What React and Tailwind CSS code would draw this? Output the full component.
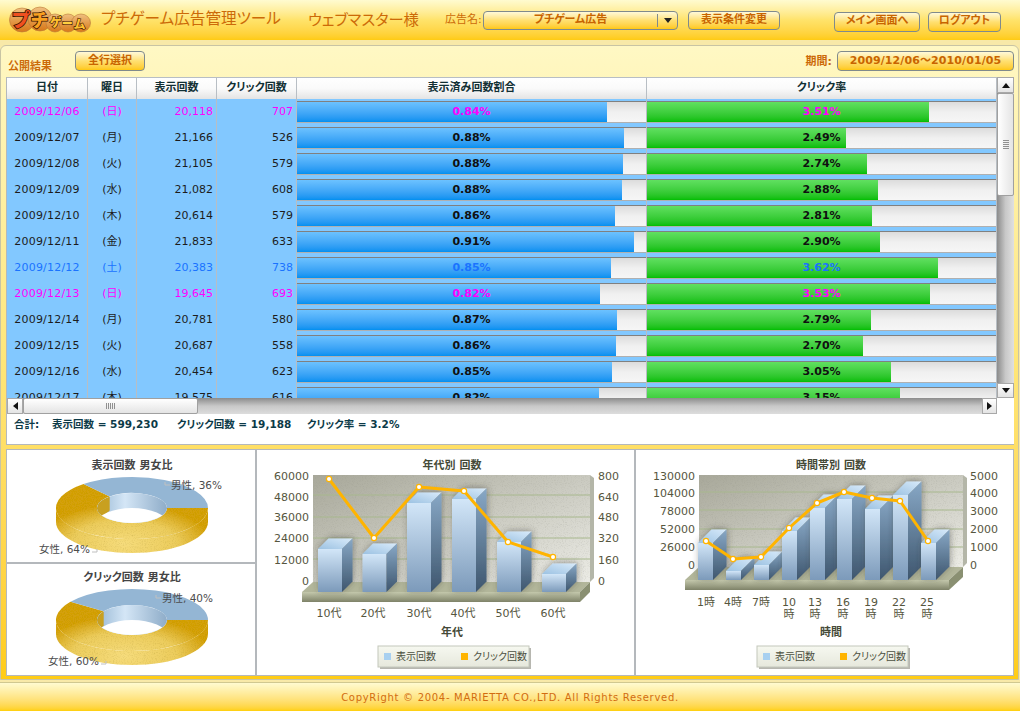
import React from "react";

const rows = [
  ["2009/12/06", "日", "20,118", "707", "0.84%", "3.51%", 310, 282, "sun"],
  ["2009/12/07", "月", "21,166", "526", "0.88%", "2.49%", 327, 199, ""],
  ["2009/12/08", "火", "21,105", "579", "0.88%", "2.74%", 326, 220, ""],
  ["2009/12/09", "水", "21,082", "608", "0.88%", "2.88%", 325, 231, ""],
  ["2009/12/10", "木", "20,614", "579", "0.86%", "2.81%", 318, 225, ""],
  ["2009/12/11", "金", "21,833", "633", "0.91%", "2.90%", 337, 233, ""],
  ["2009/12/12", "土", "20,383", "738", "0.85%", "3.62%", 314, 291, "sat"],
  ["2009/12/13", "日", "19,645", "693", "0.82%", "3.53%", 303, 283, "sun"],
  ["2009/12/14", "月", "20,781", "580", "0.87%", "2.79%", 320, 224, ""],
  ["2009/12/15", "火", "20,687", "558", "0.86%", "2.70%", 319, 216, ""],
  ["2009/12/16", "水", "20,454", "623", "0.85%", "3.05%", 315, 244, ""],
  ["2009/12/17", "木", "19,575", "616", "0.82%", "3.15%", 302, 253, ""],
];

const rowColor = { sun: "text-[#ff00ff]", sat: "text-[#1a73ff]", "": "text-[#1c1c1c]" };

const GlossButton = ({ className = "", children }) => (
  <div
    className={`flex items-center justify-center rounded-[4px] border border-[#808a8c] bg-linear-to-b from-[#fff9d8] via-[#ffe070] to-[#ffc808] text-[11px] font-bold text-[#c86400] ${className}`}
  >
    {children}
  </div>
);

const Logo = () => (
  <svg width="82" height="28" viewBox="0 0 82 28" className="shrink-0">
    <defs>
      <linearGradient id="logoBlob" x1="0" y1="0" x2="0" y2="1">
        <stop offset="0" stopColor="#f0c080" />
        <stop offset="1" stopColor="#d87818" />
      </linearGradient>
    </defs>
    <g fill="url(#logoBlob)" stroke="#b87838" strokeWidth="0.6">
      <ellipse cx="13" cy="14" rx="12.5" ry="12" />
      <ellipse cx="31" cy="13" rx="12" ry="12" />
      <ellipse cx="46" cy="17" rx="9" ry="9" />
      <ellipse cx="59" cy="17" rx="9" ry="9" />
      <ellipse cx="72" cy="17" rx="9.5" ry="9" />
    </g>
    <g fontWeight="900" stroke="#3c1600" paintOrder="stroke">
      <text x="3" y="21" fontSize="19" fill="#f05020" strokeWidth="1.6">
        プ
      </text>
      <text x="22" y="21" fontSize="18" fill="#f8a020" strokeWidth="1.6">
        チ
      </text>
      <text x="41" y="21" fontSize="12" fill="#ffc030" strokeWidth="1.2">
        ゲ
      </text>
      <text x="53" y="22" fontSize="11" fill="#ffd040" strokeWidth="1.2">
        ー
      </text>
      <text x="65" y="23" fontSize="12" fill="#ffc030" strokeWidth="1.2">
        ム
      </text>
    </g>
  </svg>
);

const Header = () => (
  <div className="flex h-[40px] shrink-0 items-center bg-linear-to-b from-[#fffbd0] via-[#ffe36a] via-50% to-[#ffcb10] pl-[9px] text-[#cc6a08]">
    <Logo />
    <div className="ml-[9px] w-[208px] pl-[1px] text-[15.6px]">プチゲーム広告管理ツール</div>
    <div className="w-[137px] text-[15.3px]">ウェブマスター様</div>
    <div className="w-[38px] text-[11px]">広告名:</div>
    <div className="flex h-[19px] w-[195px] items-center rounded-[4px] border border-[#808a8c] bg-linear-to-b from-[#fff9d8] via-[#ffe070] to-[#ffc808] text-[11px] font-bold text-[#c86400]">
      <span className="flex-1 text-center">プチゲーム広告</span>
      <span className="flex h-[13px] w-[20px] items-center justify-center border-l border-[#808a8c]">
        <span className="h-0 w-0 border-x-[4px] border-t-[5px] border-x-transparent border-t-[#222]" />
      </span>
    </div>
    <GlossButton className="ml-[10px] h-[19px] w-[92px]">表示条件変更</GlossButton>
    <GlossButton className="ml-[54px] mt-[3px] h-[20px] w-[86px]">メイン画面へ</GlossButton>
    <GlossButton className="ml-[8px] mt-[3px] h-[20px] w-[73px]">ログアウト</GlossButton>
  </div>
);

const Toolbar = () => (
  <div className="flex h-[31px] items-start pt-[5px] text-[#cc6a08]">
    <div className="ml-[2px] mt-[8px] w-[67px] text-[11px] font-bold">公開結果</div>
    <GlossButton className="h-[20px] w-[70px]">全行選択</GlossButton>
    <div className="ml-auto mt-[3px] mr-[5px] text-[11px] font-bold">期間:</div>
    <GlossButton className="mr-[4px] h-[20px] w-[177px] tracking-[0.1px]">2009/12/06～2010/01/05</GlossButton>
  </div>
);

const colGrid = "grid grid-cols-[81px_49px_80px_80px_350px_350px]";

const HeadCell = ({ children }) => (
  <div className="flex items-center justify-center border-r border-[#b8bec4] text-[11px] font-bold text-[#123034]">
    {children}
  </div>
);

const Meter = ({ width, label, color, fill }) => (
  <div className="border-r border-[#b8bec4] pt-[2px]">
    <div className="relative h-[22px] border-t border-b border-t-[#808080] border-b-[#b0b0b0] bg-linear-to-b from-[#dcdcdc] via-[#f0f0f0] to-[#f6f6f6]">
      <div className={`h-full ${fill}`} style={{ width }} />
      <div className={`absolute inset-0 flex items-center justify-center text-[11px] font-bold ${color}`}>{label}</div>
    </div>
  </div>
);

const DataRow = ({ row }) => {
  const [date, day, views, clicks, viewRate, clickRate, viewBar, clickBar, kind] = row;
  const color = rowColor[kind];
  return (
    <div className={`${colGrid} h-[26px] shrink-0 bg-[#82c8ff] text-[11px] ${color}`}>
      <div className="flex items-center justify-center border-r border-[#b8bec4] tracking-[0.2px]">{date}</div>
      <div className="flex items-center justify-center border-r border-[#b8bec4]">({day})</div>
      <div className="flex items-center justify-end border-r border-[#b8bec4] pr-[3px]">{views}</div>
      <div className="flex items-center justify-end border-r border-[#b8bec4] pr-[3px]">{clicks}</div>
      <Meter width={viewBar} label={viewRate} color={kind ? color : "text-[#101010]"} fill="bg-linear-to-b from-[#6cc2ff] to-[#0090f0]" />
      <Meter width={clickBar} label={clickRate} color={kind ? color : "text-[#101010]"} fill="bg-linear-to-b from-[#60e060] to-[#00be00]" />
    </div>
  );
};

const ScrollButton = ({ dir, className = "" }) => {
  const arrows = {
    up: "border-x-[4px] border-b-[5px] border-x-transparent border-b-[#111]",
    down: "border-x-[4px] border-t-[5px] border-x-transparent border-t-[#111]",
    left: "border-y-[4px] border-r-[5px] border-y-transparent border-r-[#111]",
    right: "border-y-[4px] border-l-[5px] border-y-transparent border-l-[#111]",
  };
  return (
    <div className={`flex shrink-0 items-center justify-center border border-[#a8a8a8] bg-linear-to-b from-[#ffffff] to-[#e4e4e4] ${className}`}>
      <span className={`h-0 w-0 ${arrows[dir]}`} />
    </div>
  );
};

const VScroll = () => (
  <div className="flex h-[321px] w-[17px] shrink-0 flex-col bg-linear-to-r from-[#8c8c8c] via-[#c8c8c8] to-[#e0e0e0]">
    <ScrollButton dir="up" className="h-[16px]" />
    <div className="flex h-[103px] flex-col items-center justify-center gap-[1px] rounded-[2px] border border-[#a0a0a0] bg-linear-to-r from-[#ffffff] to-[#e4e4e4]">
      <span className="h-px w-[6px] bg-[#909090]" />
      <span className="h-px w-[6px] bg-[#909090]" />
      <span className="h-px w-[6px] bg-[#909090]" />
      <span className="h-px w-[6px] bg-[#909090]" />
      <span className="h-px w-[6px] bg-[#909090]" />
    </div>
    <div className="flex-1" />
    <ScrollButton dir="down" className="h-[15px]" />
  </div>
);

const HScroll = () => (
  <div className="flex h-[16px] bg-linear-to-b from-[#8c8c8c] via-[#c8c8c8] to-[#dcdcdc]">
    <ScrollButton dir="left" className="w-[16px]" />
    <div className="flex w-[175px] items-center justify-center gap-[1px] rounded-[2px] border border-[#a0a0a0] bg-linear-to-b from-[#ffffff] to-[#e4e4e4]">
      <span className="h-[6px] w-px bg-[#909090]" />
      <span className="h-[6px] w-px bg-[#909090]" />
      <span className="h-[6px] w-px bg-[#909090]" />
      <span className="h-[6px] w-px bg-[#909090]" />
      <span className="h-[6px] w-px bg-[#909090]" />
    </div>
    <div className="flex-1" />
    <ScrollButton dir="right" className="w-[15px]" />
  </div>
);

const DataTable = () => (
  <div className="mr-[4px] border-b border-l border-[#b4b8bc] bg-white">
    <div className="flex">
      <div className="w-[990px]">
        <div className={`${colGrid} h-[22px] border-t border-[#b8bec4] bg-linear-to-b from-[#ffffff] via-[#fafafa] to-[#e4e4e4]`}>
          <HeadCell>日付</HeadCell>
          <HeadCell>曜日</HeadCell>
          <HeadCell>表示回数</HeadCell>
          <HeadCell>クリック回数</HeadCell>
          <HeadCell>表示済み回数割合</HeadCell>
          <HeadCell>クリック率</HeadCell>
        </div>
        <div className="flex h-[299px] flex-col overflow-hidden">
          {rows.map((row) => (
            <DataRow key={row[0]} row={row} />
          ))}
        </div>
      </div>
      <VScroll />
    </div>
    <div className="w-[990px]">
      <HScroll />
    </div>
    <div className="flex h-[30px] items-start pl-[7px] pt-[3px] text-[10.5px] font-bold text-[#0c3a48]">
      <span className="w-[38px]">合計:</span>
      <span className="w-[125px]">表示回数 = 599,230</span>
      <span className="w-[130px]">クリック回数 = 19,188</span>
      <span>クリック率 = 3.2%</span>
    </div>
  </div>
);

// speckled look of the old chart images
const Grain = ({ id, color = "0.35 0.25 0" }) => {
  const [r, g, b] = color.split(" ");
  return (
    <filter id={id} x="0" y="0" width="100%" height="100%">
      <feTurbulence type="fractalNoise" baseFrequency="0.9" numOctaves="2" seed="4" result="noise" />
      <feColorMatrix
        in="noise"
        type="matrix"
        values={`0 0 0 0 ${r} 0 0 0 0 ${g} 0 0 0 0 ${b} 0 0 0 0.7 -0.34`}
        result="dots"
      />
      <feComposite in="dots" in2="SourceGraphic" operator="in" result="spots" />
      <feMerge>
        <feMergeNode in="SourceGraphic" />
        <feMergeNode in="spots" />
      </feMerge>
    </filter>
  );
};

// parametric point on the donut ellipse, angle counted anticlockwise from the right
const pt = (cx, cy, rx, ry, deg) => {
  const a = (deg * Math.PI) / 180;
  return [cx + rx * Math.cos(a), cy - ry * Math.sin(a)];
};

const Donut = ({ id, viewBox, title, titleY, cy, share, male, maleX, maleY, female, femaleX, femaleY }) => {
  const cx = 132;
  const rx = 76;
  const ry = 31;
  const irx = 35;
  const iry = 15;
  const depth = 14;
  const deg = share * 3.6;
  const [ox, oy] = pt(cx, cy, rx, ry, deg);
  const [ix, iy] = pt(cx, cy, irx, iry, deg);
  const blue = `M${cx + rx} ${cy} A${rx} ${ry} 0 0 0 ${ox} ${oy} L${ix} ${iy} A${irx} ${iry} 0 0 1 ${cx + irx} ${cy} Z`;
  const gold = `M${cx + rx} ${cy} A${rx} ${ry} 0 1 1 ${ox} ${oy} L${ix} ${iy} A${irx} ${iry} 0 1 0 ${cx + irx} ${cy} Z`;
  const side = `M${cx - rx} ${cy} A${rx} ${ry} 0 0 0 ${cx + rx} ${cy} V${cy + depth} A${rx} ${ry} 0 0 1 ${cx - rx} ${cy + depth} Z`;
  return (
    <svg viewBox={viewBox} className="block h-full w-full">
      <defs>
        <radialGradient id={`${id}Gold`} gradientUnits="userSpaceOnUse" cx={cx - 8} cy={cy + 36} r="88" gradientTransform={`translate(0 ${(cy + 36) * 0.55}) scale(1 0.45)`}>
          <stop offset="0" stopColor="#f6dc7c" />
          <stop offset="0.6" stopColor="#eccc5c" />
          <stop offset="1" stopColor="#d4a00c" />
        </radialGradient>
        <linearGradient id={`${id}Inner`} x1="0" y1="0" x2="1" y2="0">
          <stop offset="0" stopColor="#98b8d4" />
          <stop offset="0.4" stopColor="#d4e6f6" />
          <stop offset="1" stopColor="#8eacc8" />
        </linearGradient>
        <clipPath id={`${id}Hole`}>
          <ellipse cx={cx} cy={cy} rx={irx} ry={iry} />
        </clipPath>
        <Grain id={`${id}Grain`} />
      </defs>
      <text x={cx} y={titleY + 4} textAnchor="middle" fontSize="11" fontWeight="700" fill="#444">
        {title}
      </text>
      <g filter={`url(#${id}Grain)`}>
        <path d={side} fill={`url(#${id}Gold)`} />
        <path d={gold} fill={`url(#${id}Gold)`} />
      </g>
      <path d={blue} fill="#94b6d4" />
      <ellipse cx={cx} cy={cy} rx={irx} ry={iry} fill={`url(#${id}Inner)`} />
      <path
        d={`M${cx - irx} ${cy} A${irx} ${iry} 0 0 1 ${ix} ${iy} V${iy + 14} L${cx - irx} ${cy + 14} Z`}
        fill="#c8a020"
        clipPath={`url(#${id}Hole)`}
      />
      <ellipse cx={cx} cy={cy + depth + 1} rx={irx} ry={iry} fill="#fff" clipPath={`url(#${id}Hole)`} />
      <text x={maleX} y={maleY + 4} fontSize="10.5" fill="#4c4c4c">
        {male}
      </text>
      <text x={femaleX} y={femaleY + 4} fontSize="10.5" fill="#4c4c4c">
        {female}
      </text>
      <path d={`M${maleX - 6} ${maleY - 3} v3 h5`} fill="none" stroke="#c0c0c0" />
      <path d={`M${femaleX + 53} ${femaleY + 3} h5 v-3`} fill="none" stroke="#c0c0c0" />
    </svg>
  );
};

const Chart3D = ({ id, viewBox, cfg }) => {
  const { title, titleX, axisTitle, wall, floor, bars, barW, depth, line, leftX, leftLabels, rightX, rightLabels, axisYs, grid, cats, catY, legend } = cfg;
  return (
    <svg viewBox={viewBox} className="block h-full w-full">
      <defs>
        <linearGradient id={`${id}Wall`} x1="0" y1="0" x2="1" y2="1">
          <stop offset="0" stopColor="#a8a89a" />
          <stop offset="1" stopColor="#ecece6" />
        </linearGradient>
        <linearGradient id={`${id}Floor`} x1="0" y1="0" x2="0" y2="1">
          <stop offset="0" stopColor="#c4c8ac" />
          <stop offset="1" stopColor="#7e8268" />
        </linearGradient>
        <linearGradient id={`${id}Front`} x1="0" y1="0" x2="0" y2="1">
          <stop offset="0" stopColor="#d2e6f8" />
          <stop offset="1" stopColor="#7c9aba" />
        </linearGradient>
        <linearGradient id={`${id}Side`} x1="0" y1="0" x2="0" y2="1">
          <stop offset="0" stopColor="#88a8c6" />
          <stop offset="1" stopColor="#3e566e" />
        </linearGradient>
        <linearGradient id={`${id}Top`} x1="0" y1="1" x2="1" y2="0">
          <stop offset="0" stopColor="#9cc2e2" />
          <stop offset="1" stopColor="#d8eafa" />
        </linearGradient>
        <linearGradient id={`${id}Legend`} x1="0" y1="0" x2="0" y2="1">
          <stop offset="0" stopColor="#f6f8f0" />
          <stop offset="1" stopColor="#e6e8dc" />
        </linearGradient>
        <filter id={`${id}Shadow`} x="-30%" y="-30%" width="170%" height="170%">
          <feDropShadow dx="1" dy="-1" stdDeviation="3" floodColor="#3a3a30" floodOpacity="0.45" />
        </filter>
        <Grain id={`${id}Grain`} color="0.3 0.3 0.25" />
      </defs>
      <text x={titleX} y="469" textAnchor="middle" fontSize="11" fontWeight="700" fill="#454a38">
        {title}
      </text>
      {leftLabels.map((t, i) => (
        <text key={t} x={leftX} y={axisYs[i] + 4} textAnchor="end" fontSize="11" fill="#56563e">
          {t}
        </text>
      ))}
      {rightLabels.map((t, i) => (
        <text key={t} x={rightX} y={axisYs[i] + 4} fontSize="11" fill="#56563e">
          {t}
        </text>
      ))}
      <path d={`M${wall.r} ${wall.t} l4 3 V${wall.b - 4} l-4 4 Z`} fill="#b4b6a8" />
      <rect x={wall.l} y={wall.t} width={wall.r - wall.l} height={wall.b - wall.t} fill={`url(#${id}Wall)`} filter={`url(#${id}Grain)`} />
      {grid.map((y) => (
        <line key={y} x1={wall.l} x2={wall.r} y1={y} y2={y} stroke="#a8b88e" strokeWidth="1" />
      ))}
      <path d={`M${floor.l} ${floor.t} H${floor.r} L${wall.r} ${wall.b} H${wall.l} Z`} fill="#b2b69a" />
      <rect x={floor.l} y={floor.t} width={floor.r - floor.l} height={floor.h} fill={`url(#${id}Floor)`} />
      <path d={`M${floor.r} ${floor.t} L${wall.r} ${wall.b} v${floor.h} L${floor.r} ${floor.t + floor.h} Z`} fill="#8a9072" />
      {bars.map(([x, top]) => (
        <g key={x} filter={`url(#${id}Shadow)`}>
          <rect x={x} y={top} width={barW} height={floor.t - top} fill={`url(#${id}Front)`} />
          <path d={`M${x} ${top} l${depth} ${-depth} h${barW} l${-depth} ${depth} Z`} fill={`url(#${id}Top)`} />
          <path d={`M${x + barW} ${top} l${depth} ${-depth} V${floor.t - depth} l${-depth} ${depth} Z`} fill={`url(#${id}Side)`} />
        </g>
      ))}
      <polyline points={line.map((p) => p.join(",")).join(" ")} fill="none" stroke="#ffb400" strokeWidth="3" strokeLinejoin="round" />
      {line.map(([x, y]) => (
        <circle key={x} cx={x} cy={y} r="2.6" fill="#fff" stroke="#ffb400" strokeWidth="1.2" />
      ))}
      {cats.map(([x, a, b]) => (
        <g key={a} fontSize="11" fill="#56563e" textAnchor="middle">
          <text x={x} y={catY}>
            {a}
          </text>
          {b && (
            <text x={x} y={catY} dy="12">
              {b}
            </text>
          )}
        </g>
      ))}
      <text x={titleX} y="636" textAnchor="middle" fontSize="11" fontWeight="700" fill="#454a38">
        {axisTitle}
      </text>
      <rect x={legend + 2} y="648" width="151" height="21" fill="#7c7c70" opacity="0.55" />
      <rect x={legend} y="646" width="151" height="21" fill={`url(#${id}Legend)`} stroke="#c4c8bc" />
      <rect x={legend + 6} y="653" width="7" height="7" fill="#a8d0f0" />
      <text x={legend + 18} y="660" fontSize="10" fill="#4c5040">
        表示回数
      </text>
      <rect x={legend + 83} y="653" width="7" height="7" fill="#ffb400" />
      <text x={legend + 95} y="660" fontSize="10" fill="#4c5040">
        クリック回数
      </text>
    </svg>
  );
};

const ageChart = {
  title: "年代別 回数",
  titleX: 452,
  axisTitle: "年代",
  wall: { l: 313, r: 590, t: 475, b: 582 },
  floor: { l: 302, r: 580, t: 592, h: 10 },
  barW: 24,
  depth: 10.5,
  bars: [
    [318, 549],
    [362.5, 554],
    [407, 503],
    [452, 499],
    [497, 542],
    [542, 574],
  ],
  line: [
    [329, 479],
    [374, 538],
    [419, 487],
    [464, 491],
    [508, 542],
    [553, 557],
  ],
  leftX: 309,
  leftLabels: ["60000", "48000", "36000", "24000", "12000", "0"],
  rightX: 598,
  rightLabels: ["800", "640", "480", "320", "160", "0"],
  axisYs: [476, 497, 517, 538, 560, 581],
  grid: [495, 517, 538, 559],
  catY: 617,
  cats: [
    [329, "10代"],
    [373, "20代"],
    [419, "30代"],
    [463, "40代"],
    [508, "50代"],
    [553, "60代"],
  ],
  legend: 378,
};

const hourChart = {
  title: "時間帯別 回数",
  titleX: 831,
  axisTitle: "時間",
  wall: { l: 699, r: 963, t: 475, b: 567 },
  floor: { l: 685, r: 949, t: 580, h: 10 },
  barW: 15,
  depth: 13.5,
  bars: [
    [698, 543],
    [726, 571],
    [754, 565],
    [782, 531],
    [810, 508],
    [837, 499],
    [865, 509],
    [893, 495],
    [921, 543],
  ],
  line: [
    [706, 541],
    [733, 559],
    [761, 557],
    [789, 528],
    [817, 503],
    [844, 492],
    [872, 498],
    [900, 501],
    [928, 541],
  ],
  leftX: 695,
  leftLabels: ["130000", "104000", "78000", "52000", "26000", "0"],
  rightX: 970,
  rightLabels: ["5000", "4000", "3000", "2000", "1000", "0"],
  axisYs: [476, 493, 511, 529, 547, 565],
  grid: [492, 510, 529, 547],
  catY: 606,
  cats: [
    [706, "1時"],
    [733, "4時"],
    [761, "7時"],
    [789, "10", "時"],
    [815, "13", "時"],
    [843, "16", "時"],
    [871, "19", "時"],
    [899, "22", "時"],
    [927, "25", "時"],
  ],
  legend: 757,
};

const Charts = () => (
  <div className="mt-[4px] mr-[4px] flex h-[227px] gap-[2px] border border-[#b4b8bc] bg-[#b4b8bc]">
    <div className="flex w-[248px] flex-col gap-[2px]">
      <div className="h-[112px] bg-white">
        <Donut
          id="viewDonut"
          viewBox="7 450 248 112"
          title="表示回数 男女比"
          titleY={465}
          cy={508}
          share={36}
          male="男性, 36%"
          maleX={171}
          maleY={485}
          female="女性, 64%"
          femaleX={39}
          femaleY={549}
        />
      </div>
      <div className="h-[111px] bg-white">
        <Donut
          id="clickDonut"
          viewBox="7 564 248 111"
          title="クリック回数 男女比"
          titleY={577}
          cy={620}
          share={40}
          male="男性, 40%"
          maleX={162}
          maleY={598}
          female="女性, 60%"
          femaleX={48}
          femaleY={661}
        />
      </div>
    </div>
    <div className="w-[377px] bg-white">
      <Chart3D id="age" viewBox="257 450 377 225" cfg={ageChart} />
    </div>
    <div className="w-[377px] bg-white">
      <Chart3D id="hour" viewBox="636 450 377 225" cfg={hourChart} />
    </div>
  </div>
);

const App = () => (
  <div className="flex h-[711px] w-[1020px] flex-col overflow-hidden bg-[#f8e9a8] font-['DejaVu_Sans','Noto_Sans_CJK_JP',sans-serif] [font-feature-settings:'palt']">
    <Header />
    <div className="mt-[5px] h-[635px] w-[1019px] shrink-0 rounded-t-[6px] border border-[#c8c4a4] bg-linear-to-b from-[#fff8c4] via-[#ffe678] via-50% to-[#ffcc14] pl-[5px]">
      <Toolbar />
      <DataTable />
      <Charts />
    </div>
    <div className="mt-[2px] flex flex-1 items-center justify-center border-t border-[#d0c890] bg-linear-to-b from-[#fffbd0] to-[#ffd000] text-[10px] tracking-[0.7px] text-[#d26c10]">
      CopyRight © 2004- MARIETTA CO.,LTD. All Rights Reserved.
    </div>
  </div>
);

export default App;
